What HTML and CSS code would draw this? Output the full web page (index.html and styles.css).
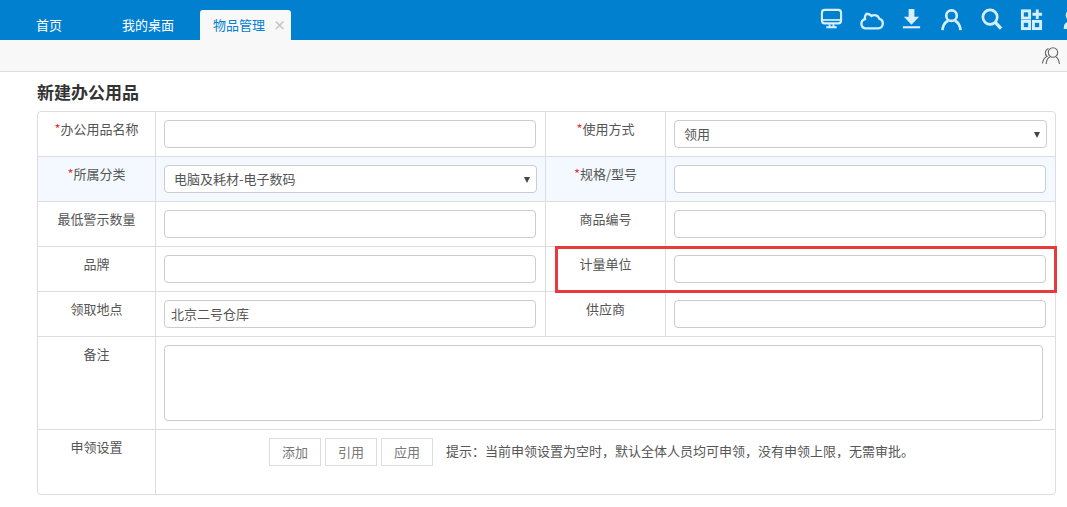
FILE: index.html
```html
<!DOCTYPE html>
<html lang="zh-CN">
<head>
    <meta charset="UTF-8">
    <meta name="viewport" content="width=device-width, initial-scale=1.0">
    <title>新建办公用品</title>
    <link rel="stylesheet" href="styles.css">
</head>
<body>
    <div class="topbar">
        <div class="tabs">
            <a class="tab tab-home">首页</a>
            <a class="tab tab-desk">我的桌面</a>
            <a class="tab tab-active">物品管理<span class="tab-close">×</span></a>
        </div>
        <div class="tools">
            <!-- monitor -->
            <svg class="tool" viewBox="0 0 24 24" fill="none" stroke="currentColor" stroke-width="2.200">
                <rect x="2" y="2" width="20" height="14" rx="3"/>
                <path d="M2.500 12.500h19" stroke-width="1.800"/>
                <path d="M10 17v2.500M14 17v2.500M6.500 20h11" stroke-width="2"/>
            </svg>
            <!-- cloud -->
            <svg class="tool tool-cloud" viewBox="0 0 24 24" fill="none" stroke="currentColor" stroke-width="2.200">
                <path d="M6 20.500h12.300a4.700 4.700 0 0 0 1.200-9.200 5 5 0 0 0-7.500-2.700A5.800 5.800 0 0 0 7.200 6.500 5.500 5.500 0 0 0 5.800 11.700 4.500 4.500 0 0 0 6 20.500z"/>
            </svg>
            <!-- download -->
            <svg class="tool" viewBox="0 0 24 24" fill="currentColor">
                <path d="M9 1h6v8h5l-8 8.500L4 9h5z"/>
                <rect x="3" y="19" width="18" height="2.200"/>
            </svg>
            <!-- user -->
            <svg class="tool" viewBox="0 0 24 24" fill="none" stroke="currentColor" stroke-width="2.800">
                <circle cx="12" cy="8" r="5.500"/>
                <path d="M2.500 23c.5-5 3-8.500 6-9.800M21.500 23c-.5-5-3-8.500-6-9.800"/>
            </svg>
            <!-- search -->
            <svg class="tool" viewBox="0 0 24 24" fill="none" stroke="currentColor" stroke-width="2.800">
                <circle cx="10.500" cy="9.500" r="7.500"/>
                <path d="M16 15l6 6.500" stroke-width="3.400"/>
            </svg>
            <!-- apps -->
            <svg class="tool" viewBox="0 0 24 24" fill="none" stroke="currentColor" stroke-width="3">
                <rect x="2.500" y="3" width="7.500" height="7.500"/>
                <rect x="2.500" y="14" width="7.500" height="7.500"/>
                <rect x="14" y="14" width="7.500" height="7.500"/>
                <path d="M18 1.500v10M13 6.500h10"/>
            </svg>
            <!-- account -->
            <svg class="tool" viewBox="0 0 24 24" fill="currentColor">
                <circle cx="12" cy="7.500" r="6"/>
                <path d="M4 20c0-4 3-6 8-6s8 2 8 6v2H4z"/>
            </svg>
        </div>
    </div>

    <div class="subbar">
        <svg class="people" viewBox="0 0 20 20" fill="none" stroke="currentColor" stroke-width="1.100">
            <circle cx="12" cy="6.500" r="4.700"/>
            <path d="M9 11c-3.500 1-3.500 5-3.800 7M15 11c2 1 3 4 3.500 7"/>
            <path d="M7.500 2.500a4.700 4.700 0 0 0-1.500 8C3 11.500 2 14 1.500 17.500"/>
        </svg>
    </div>

    <div class="page">
        <h1>新建办公用品</h1>
        <div class="form-wrap">
            <table class="form-table">
                <colgroup>
                    <col class="col-label">
                    <col class="col-field">
                    <col class="col-label2">
                    <col>
                </colgroup>
                <tr>
                    <th><span class="req">*</span>办公用品名称</th>
                    <td><input type="text"></td>
                    <th><span class="req">*</span>使用方式</th>
                    <td><div class="select select-plain">领用</div></td>
                </tr>
                <tr class="row-tint">
                    <th><span class="req">*</span>所属分类</th>
                    <td><div class="select select-wide">电脑及耗材-电子数码</div></td>
                    <th><span class="req">*</span>规格/型号</th>
                    <td><input type="text"></td>
                </tr>
                <tr>
                    <th>最低警示数量</th>
                    <td><input type="text"></td>
                    <th>商品编号</th>
                    <td><input type="text"></td>
                </tr>
                <tr>
                    <th>品牌</th>
                    <td><input type="text"></td>
                    <th>计量单位</th>
                    <td><input type="text"></td>
                </tr>
                <tr>
                    <th>领取地点</th>
                    <td><input type="text" value="北京二号仓库"></td>
                    <th>供应商</th>
                    <td><input type="text"></td>
                </tr>
                <tr class="row-note">
                    <th>备注</th>
                    <td colspan="3"><textarea></textarea></td>
                </tr>
                <tr class="row-apply">
                    <th>申领设置</th>
                    <td colspan="3">
                        <div class="apply">
                            <button>添加</button>
                            <button>引用</button>
                            <button>应用</button>
                            <span class="hint">提示：当前申领设置为空时，默认全体人员均可申领，没有申领上限，无需审批。</span>
                        </div>
                    </td>
                </tr>
            </table>
            <div class="highlight"></div>
        </div>
    </div>
</body>
</html>
```

FILE: styles.css
```css
body {
    font-family: "Noto Sans CJK SC", "Liberation Sans", sans-serif;
    font-size: 13px;
    margin: 0;
    background-color: white;
    color: #555;
    overflow: hidden;
}

.topbar {
    display: flex;
    justify-content: space-between;
    height: 40px;
    background-color: #0280d0;
    overflow: hidden;
}

.tabs {
    display: flex;
    align-items: flex-end;
}

.tab {
    display: block;
    height: 30px;
    line-height: 30px;
    color: white;
    white-space: nowrap;
}

.tab-home {
    margin-left: 36px;
}

.tab-desk {
    margin-left: 60px;
}

.tab-active {
    display: flex;
    margin-left: 26px;
    padding: 0 6px 0 13px;
    width: 72px;
    background-color: #f8f8f8;
    color: #0280d0;
    border-radius: 3px 3px 0 0;
}

.tab-close {
    margin-left: 8px;
    color: #c4c4c4;
    font-weight: bold;
    font-size: 13px;
    line-height: 29px;
}

.tools {
    display: flex;
    gap: 17px;
    margin-right: -16px;
    padding-top: 8px;
    color: #d4efff;
}

.tool {
    width: 23px;
    height: 23px;
}

.tool-cloud {
    width: 25px;
    height: 25px;
    margin: -1px -1px 0;
}

.subbar {
    display: flex;
    justify-content: flex-end;
    align-items: center;
    height: 31px;
    padding-right: 6px;
    background-color: #f8f8f8;
    border-bottom: 1px solid #ddd;
    color: #666;
}

.people {
    width: 20px;
    height: 20px;
}

.page {
    padding: 0 11px 0 37px;
}

h1 {
    margin: 0;
    padding-top: 8px;
    height: 31px;
    font-size: 17px;
    line-height: 24px;
    font-weight: bold;
    color: #333;
}

.form-wrap {
    position: relative;
}

.form-table {
    width: 1019px;
    table-layout: fixed;
    border-collapse: separate;
    border-spacing: 0;
    border: 1px solid #ddd;
    border-radius: 4px;
}

.col-label {
    width: 118px;
}

.col-field {
    width: 389px;
}

.col-label2 {
    width: 121px;
}

.form-table th,
.form-table td {
    padding: 0;
    border-bottom: 1px solid #ddd;
    box-sizing: content-box;
    vertical-align: top;
}

.form-table th {
    padding-top: 7px;
    height: 37px;
    font-weight: normal;
    line-height: 20px;
    text-align: center;
    color: #555;
    border-right: 1px solid #ddd;
}

.form-table td {
    padding: 8px 8px 0 8px;
    height: 36px;
}

.form-table td + th {
    border-left: 1px solid #ddd;
}

.form-table tr:last-child th,
.form-table tr:last-child td {
    border-bottom: none;
}

.row-tint th,
.row-tint td {
    background-color: #f3f9fe;
}

.req {
    color: #e4393c;
}

input,
textarea,
.select {
    display: block;
    box-sizing: border-box;
    border: 1px solid #ccc;
    border-radius: 4px;
    background-color: white;
    font-family: inherit;
    font-size: 13px;
    color: #555;
}

input {
    width: 372px;
    height: 28px;
    padding: 0 6px 2px;
}

.select {
    position: relative;
    width: 373px;
    height: 28px;
    line-height: 26px;
    padding-left: 9px;
}

.select::after {
    content: "";
    position: absolute;
    right: 6px;
    top: 11px;
    border-left: 3px solid transparent;
    border-right: 3px solid transparent;
    border-top: 6px solid #444;
}

.row-note th {
    height: 85px;
}

.row-note td {
    height: 84px;
}

textarea {
    width: 879px;
    height: 76px;
    resize: none;
}

.row-apply th {
    height: 57px;
}

.row-apply td {
    height: 56px;
}

.apply {
    display: flex;
    align-items: center;
    height: 28px;
    padding-left: 105px;
    gap: 4px;
}

.apply button {
    width: 52px;
    height: 28px;
    padding: 0 0 2px;
    background-color: white;
    border: 1px solid #ddd;
    font-family: inherit;
    font-size: 13px;
    color: #777;
}

.hint {
    margin-left: 9px;
    margin-top: -4px;
    color: #555;
}

.highlight {
    position: absolute;
    left: 518px;
    top: 135px;
    width: 496px;
    height: 41px;
    border: 3px solid #e8393c;
    pointer-events: none;
}
```
